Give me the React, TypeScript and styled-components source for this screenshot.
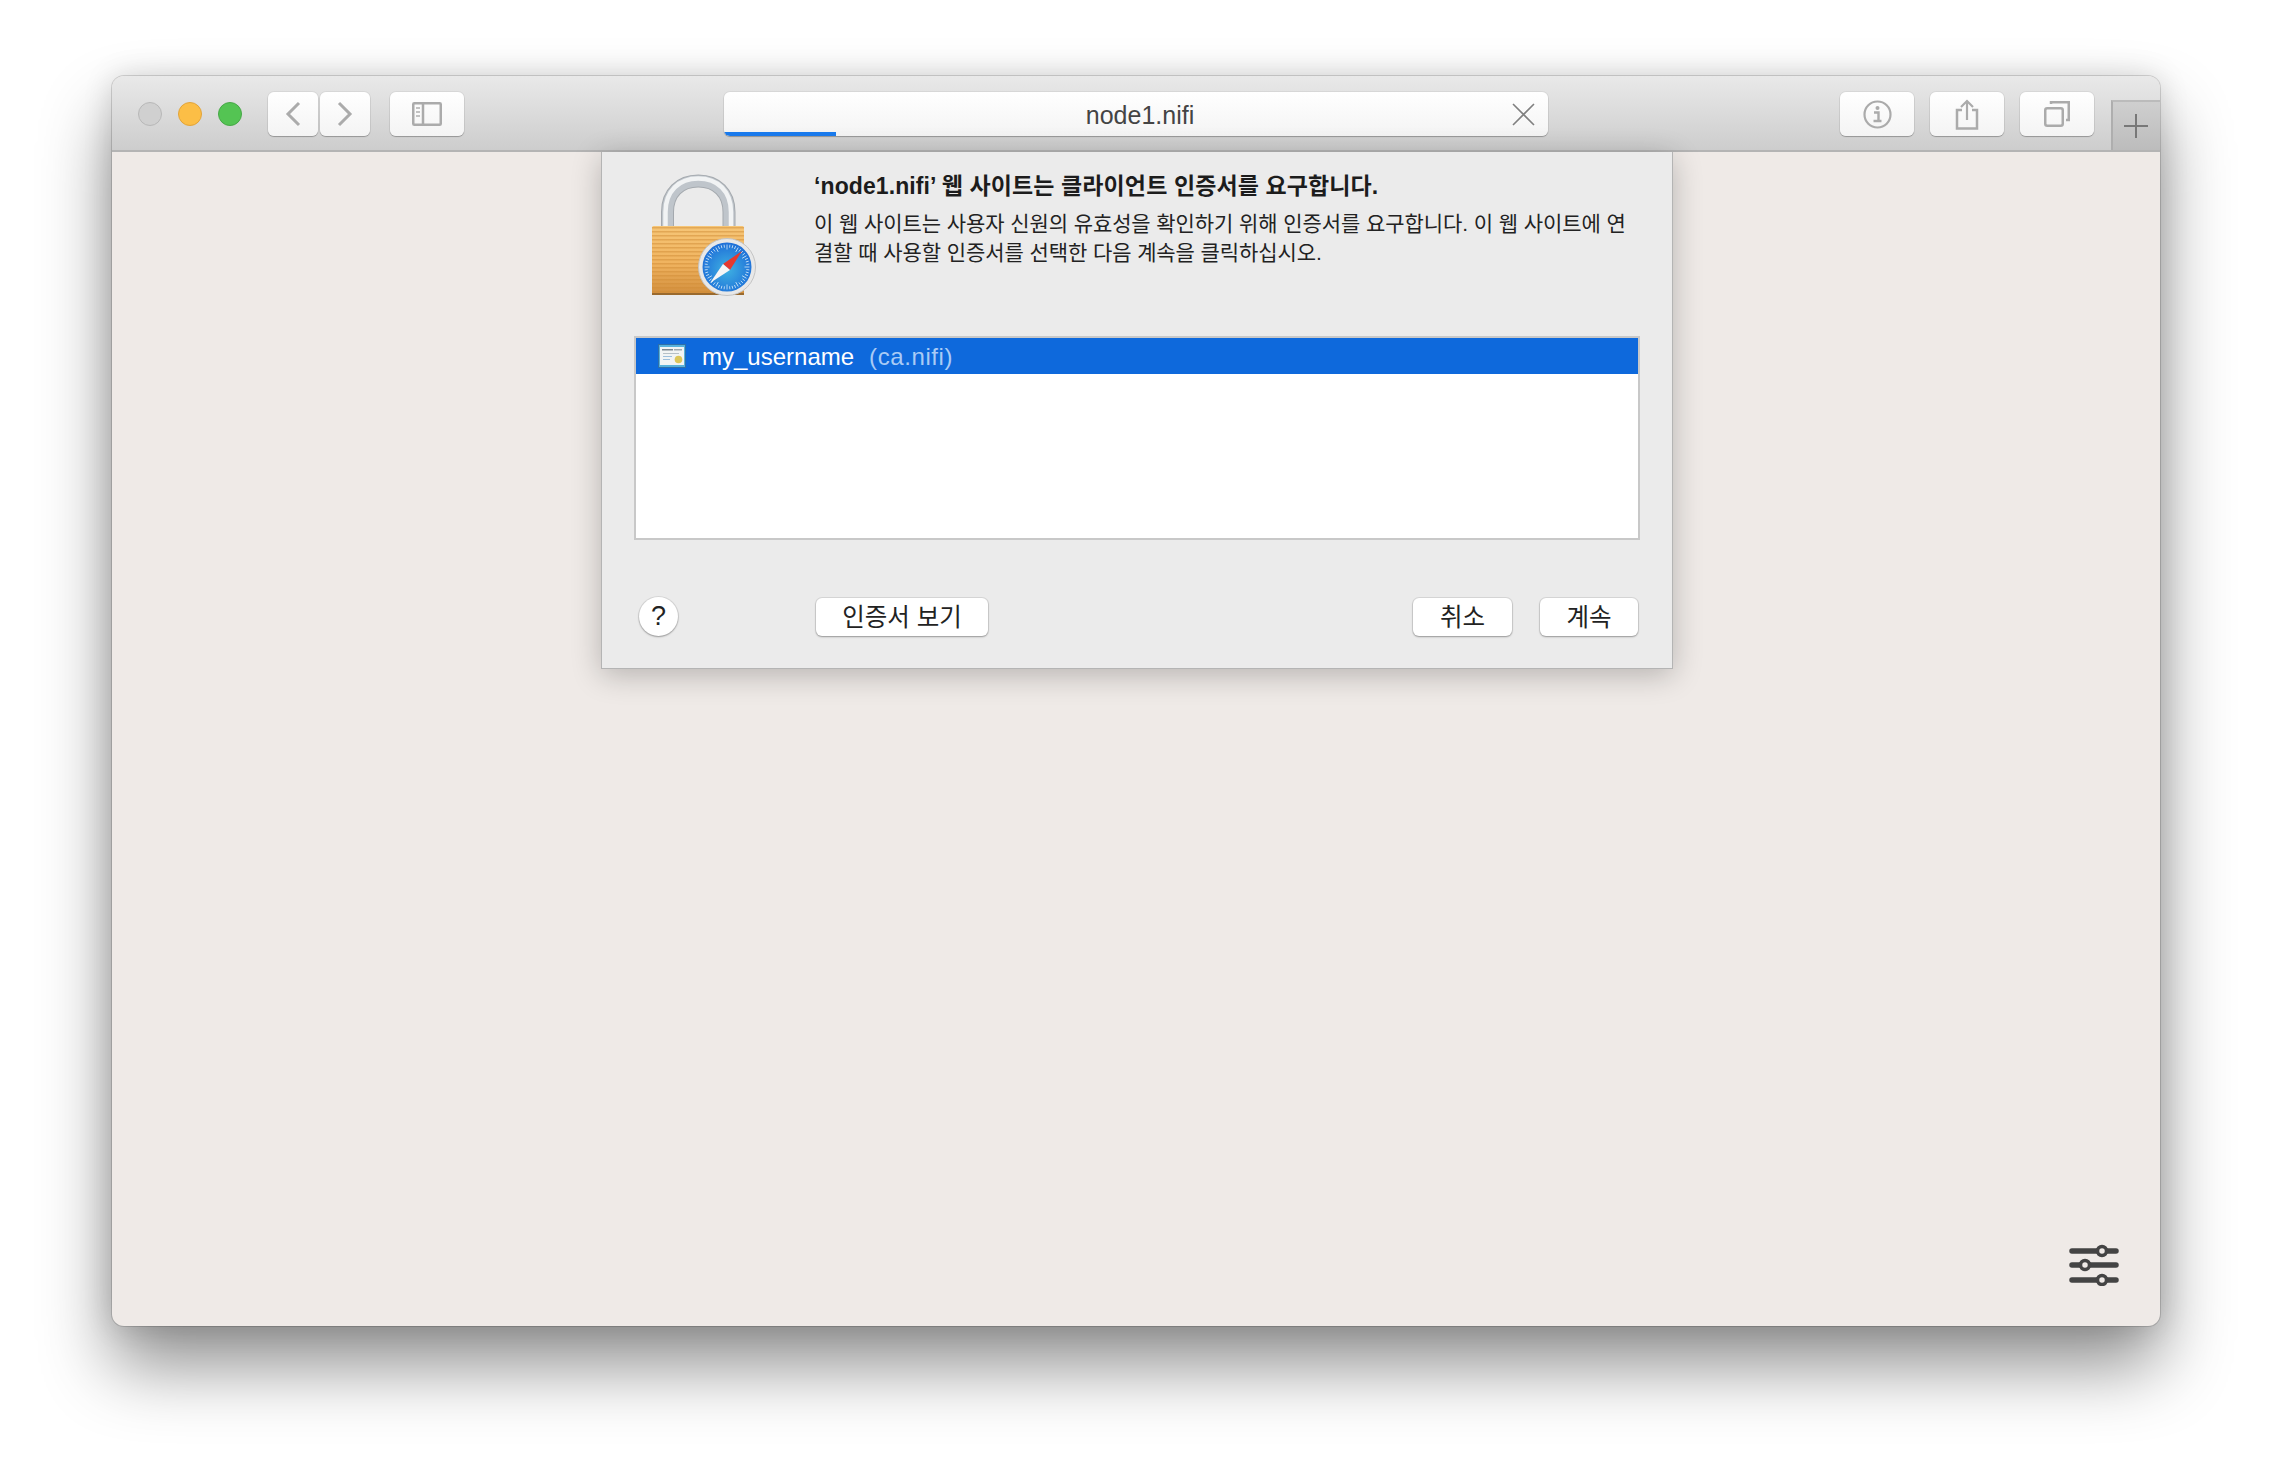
import React from 'react'
import styled, { createGlobalStyle } from 'styled-components'

const GlobalStyle = createGlobalStyle`
  html, body {
    margin: 0;
    padding: 0;
    background: #ffffff;
    font-family: "Liberation Sans", "Noto Sans CJK KR", sans-serif;
  }
`

const Page = styled.div`
  width: 2272px;
  height: 1474px;
  padding: 76px 112px 148px;
  box-sizing: border-box;
  overflow: hidden;
`

const Window = styled.div`
  position: relative;
  height: 100%;
  display: flex;
  flex-direction: column;
  border-radius: 12px;
  overflow: visible;
  background: #efeae7;
  box-shadow: 0 0 0 1px rgba(0, 0, 0, 0.14), 0 40px 70px rgba(0, 0, 0, 0.44), 0 0 30px rgba(0, 0, 0, 0.14);
`

const TitleBar = styled.div`
  height: 76px;
  box-sizing: border-box;
  flex: none;
  display: flex;
  align-items: flex-start;
  padding: 16px 0 0 26px;
  border-radius: 12px 12px 0 0;
  border-bottom: 2px solid #b4b4b4;
  background: linear-gradient(#e9e9e9, #cdcdcd);
`

const Lights = styled.div`
  display: flex;
  gap: 16px;
  margin-top: 10px;
`

const Light = styled.div<{ $fill: string; $edge: string }>`
  width: 24px;
  height: 24px;
  box-sizing: border-box;
  border-radius: 50%;
  background: ${(p) => p.$fill};
  border: 1px solid ${(p) => p.$edge};
`

const ToolButton = styled.div<{ $w: number; $ml: number }>`
  width: ${(p) => p.$w}px;
  height: 44px;
  margin-left: ${(p) => p.$ml}px;
  flex: none;
  box-sizing: border-box;
  border-radius: 6px;
  display: flex;
  align-items: center;
  justify-content: center;
  background: linear-gradient(#ffffff, #f4f4f4);
  box-shadow: 0 0 0 1px rgba(0, 0, 0, 0.05), 0 1px 1px rgba(0, 0, 0, 0.25);
`

const AddressBar = styled.div`
  position: relative;
  width: 824px;
  height: 44px;
  margin-left: 260px;
  flex: none;
  border-radius: 6px;
  overflow: hidden;
  display: flex;
  align-items: center;
  justify-content: center;
  color: #444444;
  font-size: 25px;
  padding: 2px 0 0 8px;
  box-sizing: border-box;
  background: linear-gradient(#ffffff, #f4f4f4);
  box-shadow: 0 0 0 1px rgba(0, 0, 0, 0.05), 0 1px 1px rgba(0, 0, 0, 0.25);
`

const Progress = styled.div`
  position: absolute;
  left: 0;
  bottom: 0;
  width: 112px;
  height: 4px;
  background: #1a7bee;
`

const CloseIcon = styled.svg`
  position: absolute;
  right: 13px;
  top: 11px;
`

const RightTools = styled.div`
  margin-left: 292px;
  display: flex;
`

const NewTab = styled.div`
  width: 49px;
  height: 50px;
  margin-left: 17px;
  margin-top: 8px;
  flex: none;
  box-sizing: border-box;
  display: flex;
  align-items: center;
  justify-content: center;
  padding-right: 2px;
  border-left: 2px solid #aeaeae;
  border-top: 2px solid #bbbbbb;
  background: linear-gradient(#cfcfcf, #bcbcbc);
`

const Content = styled.div`
  flex: 1;
  border-radius: 0 0 12px 12px;
  position: relative;
`

const Sheet = styled.div`
  width: 1072px;
  margin-left: 489px;
  box-sizing: border-box;
  background: #ebebeb;
  border: solid #b4b4b4;
  border-width: 0 1px 1px 1px;
  box-shadow: 0 6px 28px rgba(0, 0, 0, 0.24);
`

const SheetHeader = styled.div`
  height: 184px;
  display: flex;
  align-items: flex-start;
`

const LockSvg = styled.svg`
  margin: 19px 0 0 44px;
  flex: none;
`

const SheetText = styled.div`
  margin: 19px 0 0 58px;
  white-space: nowrap;
`

const Heading = styled.div`
  font-size: 23px;
  line-height: 30px;
  font-weight: 700;
  letter-spacing: 0.1px;
  color: #1c1c1c;
  margin-bottom: 8px;
`

const Message = styled.div`
  font-size: 21px;
  line-height: 29px;
  letter-spacing: -0.08px;
  color: #222222;
`

const CertList = styled.div`
  margin: 0 32px 0 32px;
  height: 204px;
  box-sizing: border-box;
  border: 2px solid #c8c8c8;
  background: #ffffff;
`

const CertRow = styled.div`
  height: 36px;
  display: flex;
  align-items: center;
  padding: 0 0 0 22px;
  background: #0e69dc;
  font-size: 24px;
  color: #ffffff;
`

const CertName = styled.span`
  margin: 2px 0 0 16px;
`

const CertIssuer = styled.span`
  margin: 2px 0 0 15px;
  letter-spacing: 0.6px;
  color: #a9cbf5;
`

const SheetFooter = styled.div`
  display: flex;
  align-items: center;
  margin: 57px 34px 32px 37px;
  height: 39px;
`

const HelpButton = styled.div`
  width: 39px;
  height: 39px;
  border-radius: 50%;
  box-sizing: border-box;
  display: flex;
  align-items: center;
  justify-content: center;
  background: #ffffff;
  font-size: 27px;
  color: #222222;
  box-shadow: 0 0 0 1px rgba(0, 0, 0, 0.08), 0 1px 2px rgba(0, 0, 0, 0.3);
`

const PushButton = styled.div<{ $w: number; $ml: number }>`
  width: ${(p) => p.$w}px;
  height: 38px;
  margin-left: ${(p) => p.$ml}px;
  padding-bottom: 3px;
  box-sizing: border-box;
  border-radius: 6px;
  display: flex;
  align-items: center;
  justify-content: center;
  background: #ffffff;
  font-size: 24.5px;
  color: #222222;
  box-shadow: 0 0 0 1px rgba(0, 0, 0, 0.08), 0 1px 2px rgba(0, 0, 0, 0.3);
`

const SettingsIcon = styled.svg`
  position: absolute;
  right: 41px;
  bottom: 40px;
`

const grey = '#ababab'

const shacklePath = 'M21.500 56V41C21.500 22 34 10 52.250 10S83 22 83 41V56'
const shackleShine = 'M19.500 56V41C19.500 20 33 7.500 52.250 7.500S85 20 85 41V56'

const LockIcon = () => {
  const ticks = Array.from({ length: 48 }, (_, i) => (i * 360) / 48)
  const stripes = Array.from({ length: 17 }, (_, i) => 56 + i * 4)
  return (
    <LockSvg width="110" height="125" viewBox="0 0 110 125">
      <defs>
        <linearGradient id="lockBody" x1="0" y1="0" x2="0" y2="1">
          <stop offset="0" stopColor="#f6c677" />
          <stop offset="0.55" stopColor="#f0b35f" />
          <stop offset="1" stopColor="#d28f3e" />
        </linearGradient>
        <radialGradient id="dial" cx="0.5" cy="0.55" r="0.55">
          <stop offset="0" stopColor="#3fb2e2" />
          <stop offset="1" stopColor="#1f6fd8" />
        </radialGradient>
      </defs>
      <path d={shacklePath} fill="none" stroke="#a4a9ae" strokeWidth="13" />
      <path d={shacklePath} fill="none" stroke="#bfc5cb" strokeWidth="11" />
      <path d={shackleShine} fill="none" stroke="#f1f3f4" strokeWidth="4.500" />
      <rect x="6" y="55" width="92" height="68" rx="1.500" fill="url(#lockBody)" />
      {stripes.map((y) => (
        <rect key={y} x="6" y={y} width="92" height="1.500" fill="#cf8c35" opacity="0.5" />
      ))}
      <rect x="6" y="122" width="92" height="2" fill="#9a6a2e" />
      <circle cx="81" cy="96" r="28.500" fill="#e8e8e8" stroke="#c4c4c4" strokeWidth="1" />
      <circle cx="81" cy="96" r="24.500" fill="url(#dial)" />
      {ticks.map((a) => (
        <line
          key={a}
          x1="81"
          y1="73.500"
          x2="81"
          y2={a % 30 === 0 ? 78.500 : 76.500}
          stroke="#cfe6f8"
          strokeWidth="0.8"
          transform={`rotate(${a} 81 96)`}
        />
      ))}
      <path d="M96 80L77 93L84 99Z" fill="#e5392f" />
      <path d="M64 112L77 93L84 99Z" fill="#f6f6f6" />
    </LockSvg>
  )
}

const CertIcon = () => (
  <svg width="28" height="24" viewBox="0 0 28 24">
    <rect x="0" y="0" width="28" height="24" fill="#2f6fa8" />
    <rect x="1" y="1" width="26" height="22" fill="#58b2dc" />
    <rect x="2" y="3" width="24" height="18" fill="#f2f4f4" />
    <rect x="4" y="5" width="11" height="1.500" fill="#7c8790" />
    <rect x="16" y="5" width="8" height="1.500" fill="#a0a8ae" />
    <rect x="5" y="9" width="16" height="1" fill="#b6c0c6" />
    <rect x="5" y="12" width="9" height="1" fill="#9dbfdc" />
    <rect x="5" y="15" width="7" height="1" fill="#9dbfdc" />
    <circle cx="20.500" cy="15.500" r="3.800" fill="#dcc65a" />
  </svg>
)

const App: React.FC = () => (
  <>
    <GlobalStyle />
    <Page>
      <Window>
        <TitleBar>
          <Lights>
            <Light $fill="#d0d0d0" $edge="#b8b8b8" />
            <Light $fill="#fcbe46" $edge="#e2a43a" />
            <Light $fill="#54c453" $edge="#47a847" />
          </Lights>
          <ToolButton $w={50} $ml={26}>
            <svg width="16" height="26" viewBox="0 0 16 26">
              <path d="M14 2L3 13L14 24" fill="none" stroke={grey} strokeWidth="3" />
            </svg>
          </ToolButton>
          <ToolButton $w={50} $ml={2}>
            <svg width="16" height="26" viewBox="0 0 16 26">
              <path d="M2 2L13 13L2 24" fill="none" stroke={grey} strokeWidth="3" />
            </svg>
          </ToolButton>
          <ToolButton $w={74} $ml={20}>
            <svg width="30" height="24" viewBox="0 0 30 24">
              <rect x="1.250" y="1.250" width="27.500" height="21.500" rx="1" fill="none" stroke={grey} strokeWidth="2.500" />
              <path d="M11 1V23" stroke={grey} strokeWidth="2.500" />
              <path d="M4 6H8M4 10H8M4 14H8" stroke="#c2c2c2" strokeWidth="2" />
            </svg>
          </ToolButton>
          <AddressBar>
            node1.nifi
            <Progress />
            <CloseIcon width="23" height="23" viewBox="0 0 23 23">
              <path d="M1 1L22 22M22 1L1 22" stroke="#808080" strokeWidth="1.600" />
            </CloseIcon>
          </AddressBar>
          <RightTools>
            <ToolButton $w={74} $ml={0}>
              <svg width="29" height="29" viewBox="0 0 29 29">
                <circle cx="14.500" cy="14.500" r="13" fill="none" stroke={grey} strokeWidth="2.200" />
                <circle cx="14.500" cy="8" r="2" fill={grey} />
                <path d="M11 12.500H15.500V20.500M10.500 21H18.500" fill="none" stroke={grey} strokeWidth="2.400" />
              </svg>
            </ToolButton>
            <ToolButton $w={74} $ml={16}>
              <svg width="24" height="31" viewBox="0 0 24 31">
                <path d="M7 11H2V29.500H22V11H17" fill="none" stroke={grey} strokeWidth="2.500" />
                <path d="M12 2V21M6 8L12 2L18 8" fill="none" stroke={grey} strokeWidth="2.200" />
              </svg>
            </ToolButton>
            <ToolButton $w={74} $ml={16}>
              <svg width="26" height="26" viewBox="0 0 26 26">
                <rect x="1.250" y="7.250" width="17.500" height="17.500" rx="2" fill="none" stroke={grey} strokeWidth="2.500" />
                <path d="M7 3V1.250H24.750V19H22" fill="none" stroke={grey} strokeWidth="2.500" />
              </svg>
            </ToolButton>
          </RightTools>
          <NewTab>
            <svg width="24" height="24" viewBox="0 0 24 24">
              <path d="M12 0V24M0 12H24" stroke="#787878" strokeWidth="2" />
            </svg>
          </NewTab>
        </TitleBar>
        <Content>
          <Sheet>
            <SheetHeader>
              <LockIcon />
              <SheetText>
                <Heading>‘node1.nifi’ 웹 사이트는 클라이언트 인증서를 요구합니다.</Heading>
                <Message>
                  이 웹 사이트는 사용자 신원의 유효성을 확인하기 위해 인증서를 요구합니다. 이 웹 사이트에 연
                  <br />
                  결할 때 사용할 인증서를 선택한 다음 계속을 클릭하십시오.
                </Message>
              </SheetText>
            </SheetHeader>
            <CertList>
              <CertRow>
                <CertIcon />
                <CertName>my_username</CertName>
                <CertIssuer>(ca.nifi)</CertIssuer>
              </CertRow>
            </CertList>
            <SheetFooter>
              <HelpButton>?</HelpButton>
              <PushButton $w={172} $ml={138}>인증서 보기</PushButton>
              <PushButton $w={99} $ml={425}>취소</PushButton>
              <PushButton $w={98} $ml={28}>계속</PushButton>
            </SheetFooter>
          </Sheet>
          <SettingsIcon width="50" height="42" viewBox="0 0 50 42">
            <path d="M3 7H47M3 21H47M3 36H47" stroke="#444444" strokeWidth="5.500" strokeLinecap="round" />
            <circle cx="33" cy="7" r="4.500" fill="#efeae7" stroke="#444444" strokeWidth="3.500" />
            <circle cx="16" cy="21" r="4.500" fill="#efeae7" stroke="#444444" strokeWidth="3.500" />
            <circle cx="33" cy="36" r="4.500" fill="#efeae7" stroke="#444444" strokeWidth="3.500" />
          </SettingsIcon>
        </Content>
      </Window>
    </Page>
  </>
)

export default App
